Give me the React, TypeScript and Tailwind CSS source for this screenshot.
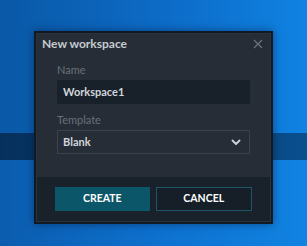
import React from 'react';

function CloseIcon() {
  return (
    <svg width="10" height="10" viewBox="0 0 10 10" className="block">
      <path d="M1 1 L9 9 M9 1 L1 9" stroke="#6d757e" strokeWidth="1.1" fill="none" />
    </svg>
  );
}

function Chevron() {
  return (
    <svg width="10" height="7" viewBox="0 0 10 7" className="block">
      <path d="M1.5 1.5 L5 5 L8.5 1.5" stroke="#c9ced4" strokeWidth="2" fill="none" strokeLinecap="round" strokeLinejoin="round" />
    </svg>
  );
}

export default function App() {
  return (
    <div className="relative w-[307px] h-[246px] overflow-hidden font-['Lato',sans-serif]">
      {/* desktop backdrop */}
      <div className="flex flex-col h-full">
        <div className="h-[133px] bg-[linear-gradient(90deg,#0a58a6_0%,#0d6cc8_55%,#1082e2_100%)]" />
        <div className="h-[27px] bg-[linear-gradient(90deg,#06305c_0%,#07427a_60%,#0a4f8e_100%)]" />
        <div className="flex-1 bg-[linear-gradient(90deg,#0b5cae_0%,#0e72d0_55%,#1183e2_100%)]" />
      </div>

      {/* dialog */}
      <div className="absolute left-[34px] top-[31px] w-[239px] border-2 border-[#101a25] shadow-[0_0_8px_rgba(0,20,50,0.5)]">
        <div className="border border-[#2b323b] bg-[#262d36]">
          <div className="h-[20px] flex items-center justify-between pl-[5px] pr-[7px]">
            <span className="text-[12px] font-bold text-[#c5cad1]">New workspace</span>
            <CloseIcon />
          </div>

          <div className="px-5 pt-[9px] pb-[23px]">
            <div className="text-[11px] leading-[14px] text-[#69717b] mb-[3px]">Name</div>
            <div className="h-[24px] bg-[#18202a] flex items-center px-[6px]">
              <span className="text-[11px] font-bold text-[#d2d6db]">Workspace1</span>
            </div>

            <div className="text-[11px] leading-[14px] text-[#69717b] mt-[9px] mb-[3px]">Template</div>
            <div className="h-[24px] bg-[#262d36] border border-[#3a424b] flex items-center justify-between pl-[5px] pr-[8px]">
              <span className="text-[11px] font-bold text-[#d2d6db]">Blank</span>
              <Chevron />
            </div>
          </div>

          <div className="bg-[#19212a] px-[18px] py-[10px] flex gap-[6px]">
            <button className="flex-1 h-[24px] bg-[#0b5668] text-white text-[10.5px] font-bold">CREATE</button>
            <button className="flex-1 h-[24px] bg-[#161e27] border border-[#1e5466] text-white text-[10.5px] font-bold">CANCEL</button>
          </div>
        </div>
      </div>
    </div>
  );
}
